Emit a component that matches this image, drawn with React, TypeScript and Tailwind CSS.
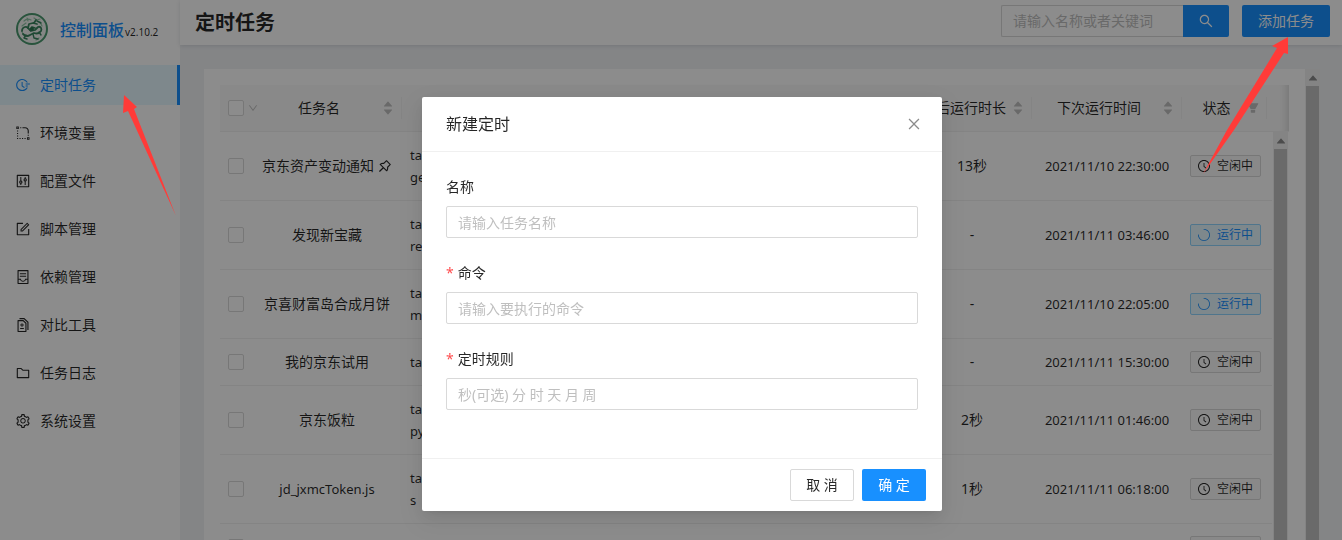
import { useState, type ReactNode } from "react"
import {
  AiFillCaretDown,
  AiFillCaretUp,
  AiFillFilter,
  AiOutlineClockCircle,
  AiOutlineClose,
  AiOutlineContainer,
  AiOutlineControl,
  AiOutlineDiff,
  AiOutlineDown,
  AiOutlineFieldTime,
  AiOutlineFolder,
  AiOutlineForm,
  AiOutlineLoading3Quarters,
  AiOutlinePushpin,
  AiOutlineRadiusSetting,
  AiOutlineSearch,
  AiOutlineSetting,
} from "react-icons/ai"

// trims the blank margin that the icons carry
const TIGHT = "64 64 896 896"

const MENU = [
  { label: "定时任务", icon: AiOutlineFieldTime },
  { label: "环境变量", icon: AiOutlineRadiusSetting },
  { label: "配置文件", icon: AiOutlineControl },
  { label: "脚本管理", icon: AiOutlineForm },
  { label: "依赖管理", icon: AiOutlineContainer },
  { label: "对比工具", icon: AiOutlineDiff },
  { label: "任务日志", icon: AiOutlineFolder },
  { label: "系统设置", icon: AiOutlineSetting },
]

type Task = {
  name: string
  command: string[]
  duration: string
  next: string
  running?: boolean
  pinned?: boolean
}

const TASKS: Task[] = [
  { name: "京东资产变动通知", command: ["task jd_bean_chan", "ge.js"], duration: "13秒", next: "2021/11/10 22:30:00", pinned: true },
  { name: "发现新宝藏", command: ["task jd_t", "reasure.js"], duration: "-", next: "2021/11/11 03:46:00", running: true },
  { name: "京喜财富岛合成月饼", command: ["task jd_cfd_", "mooncake.js"], duration: "-", next: "2021/11/10 22:05:00", running: true },
  { name: "我的京东试用", command: ["task jd_try.js"], duration: "-", next: "2021/11/11 15:30:00" },
  { name: "京东饭粒", command: ["task jd_fanli.", "py"], duration: "2秒", next: "2021/11/11 01:46:00" },
  { name: "jd_jxmcToken.js", command: ["task jd_jxmcToken.j", "s"], duration: "1秒", next: "2021/11/11 06:18:00" },
  { name: "京东试用", command: ["task jd_trial.js"], duration: "-", next: "2021/11/11 08:00:00" },
]

function Logo() {
  return (
    <svg viewBox="0 0 32 32" className="h-8 w-8 shrink-0" fill="none" strokeLinecap="round" strokeLinejoin="round">
      <circle cx="16" cy="16" r="15" fill="#f2f5f2" stroke="#4c9a70" strokeWidth="2" />
      <g stroke="#8fc4a6" strokeWidth="1.2">
        <path d="M8 8c2-2 5-2 7-1M18 5l3 2 3-1M6 13l4-3M24 9l2 4M8 22l-2-3M20 27l3-2M11 5l1 3" />
      </g>
      <g stroke="#3a8560" strokeWidth="1.8">
        <path d="M6 18c0-4 4-5 6-3l3 3 4-1 3-3c3-1 4 2 3 4-2 3-4 3-7 2l-4 2c-3 2-5 1-7-1" />
        <path d="M12 15l1-4 4-1 4 1M18 10l2-3M14 17l2-3 3 1" />
        <path d="M10 22l-2 3 3 1M17 21l1 4 4 1M23 19l2 3M21 8l4 2" strokeWidth="1.4" />
      </g>
      <circle cx="16" cy="16" r="2" fill="#2c7550" />
    </svg>
  )
}

function Sidebar() {
  return (
    <aside className="w-[180px] shrink-0 bg-white">
      <div className="flex h-[65px] items-center gap-3 pb-2 pl-4">
        <Logo />
        <div className="flex items-baseline whitespace-nowrap pt-1">
          <span className="text-base font-medium text-[#1890ff]">控制面板</span>
          <span className="pl-px text-[10px] text-black/85">v2.10.2</span>
        </div>
      </div>
      <nav className="flex flex-col gap-2">
        {MENU.map(({ label, icon: Icon }, i) => (
          <a
            key={label}
            href="#"
            className={
              i === 0
                ? "flex h-10 items-center gap-2.5 border-r-3 border-[#1890ff] bg-[#e6f7ff] pl-4 text-[#1890ff]"
                : "flex h-10 items-center gap-2.5 pl-4 text-black/85"
            }
          >
            <Icon size={14} viewBox={TIGHT} />
            {label}
          </a>
        ))}
      </nav>
    </aside>
  )
}

function PageHeader() {
  return (
    <header className="flex h-[45px] shrink-0 items-center justify-between bg-white pr-3 pb-[3px] pl-[15px] shadow-[0_1px_4px_rgba(0,21,41,0.12)]">
      <h1 className="pt-1 text-xl font-semibold text-black/85">定时任务</h1>
      <div className="flex gap-[13px]">
        <form className="flex h-8" onSubmit={(e) => e.preventDefault()}>
          <input
            aria-label="搜索任务"
            placeholder="请输入名称或者关键词"
            className="w-[182px] rounded-l-xs border border-r-0 border-[#d9d9d9] px-[11px] placeholder:text-[#bfbfbf]"
          />
          <button aria-label="搜索" className="flex w-[46px] items-center justify-center rounded-r-xs bg-[#1890ff] text-white">
            <AiOutlineSearch size={14} viewBox={TIGHT} />
          </button>
        </form>
        <button className="h-8 rounded-xs bg-[#1890ff] px-4 text-white">添加任务</button>
      </div>
    </header>
  )
}

function Columns() {
  return (
    <colgroup>
      <col className="w-8" />
      <col className="w-[150px]" />
      <col />
      <col className="w-[150px]" />
      <col className="w-[120px]" />
      <col className="w-[150px]" />
      <col className="w-[85px]" />
      <col className="w-[5px]" />
    </colgroup>
  )
}

function Sorter() {
  return (
    <span className="flex flex-col items-center text-[#bfbfbf]">
      <AiFillCaretUp size={12} className="-mb-1" />
      <AiFillCaretDown size={12} />
    </span>
  )
}

function HeadCell({ title, icon }: { title: string; icon?: ReactNode }) {
  return (
    <th className="p-0 font-normal">
      <div className="flex h-[22px] items-center gap-1 border-r border-[#f0f0f0] pr-[7px] pl-2">
        <span className="flex-1 whitespace-nowrap">{title}</span>
        {icon}
      </div>
    </th>
  )
}

function Checkbox({ label }: { label: string }) {
  return (
    <input
      type="checkbox"
      aria-label={label}
      className="block h-4 w-4 shrink-0 appearance-none rounded-xs border border-[#d9d9d9] bg-white"
    />
  )
}

function ScrollBar() {
  return (
    <div className="flex w-[15px] shrink-0 flex-col items-center bg-[#f1f1f1]">
      <span className="flex h-[17px] items-center text-[#8a8a8a]">
        <AiFillCaretUp size={12} />
      </span>
      <span className="w-[13px] flex-1 bg-[#c1c1c1]" />
    </div>
  )
}

function StatusTag({ running }: { running?: boolean }) {
  return (
    <span
      className={
        running
          ? "flex h-[22px] w-[71px] items-center gap-[7px] rounded-xs border border-[#91d5ff] bg-[#e6f7ff] pl-[7px] text-xs text-[#1890ff]"
          : "flex h-[22px] w-[71px] items-center gap-[7px] rounded-xs border border-[#d9d9d9] bg-[#fafafa] pl-[7px] text-xs text-black/85"
      }
    >
      {running ? <AiOutlineLoading3Quarters size={12} /> : <AiOutlineClockCircle size={12} viewBox={TIGHT} />}
      {running ? "运行中" : "空闲中"}
    </span>
  )
}

function TaskTable() {
  return (
    <div className="flex min-h-0 flex-1 flex-col">
      <div className="border-b border-[#f0f0f0] bg-[#fafafa] pr-[17px] shadow-[inset_-10px_0_8px_-8px_rgba(0,0,0,0.15)]">
        <table className="h-[46px] w-full table-fixed">
          <Columns />
          <thead>
            <tr>
              <th className="p-0">
                <span className="flex items-center gap-1 pl-2">
                  <Checkbox label="全选" />
                  <AiOutlineDown size={10} viewBox={TIGHT} className="shrink-0 text-[#bfbfbf]" />
                </span>
              </th>
              <HeadCell title="任务名" icon={<Sorter />} />
              <HeadCell title="任务" icon={<Sorter />} />
              <HeadCell title="最后运行时间" icon={<Sorter />} />
              <HeadCell title="最后运行时长" icon={<Sorter />} />
              <HeadCell title="下次运行时间" icon={<Sorter />} />
              <HeadCell title="状态" icon={<AiFillFilter size={12} viewBox={TIGHT} className="text-[#bfbfbf]" />} />
              <th />
            </tr>
          </thead>
        </table>
      </div>
      <div className="flex min-h-0 flex-1 overflow-hidden">
        <div className="min-w-0 flex-1">
          <table className="w-full table-fixed border-separate border-spacing-0 text-center [&_td]:border-b [&_td]:border-[#f0f0f0] [&_td]:py-3">
            <Columns />
            <tbody>
              {TASKS.map((task) => (
                <tr key={task.name}>
                  <td className="pl-2">
                    <Checkbox label={task.name} />
                  </td>
                  <td className={task.name.startsWith("jd") ? "text-[13px] leading-[22px]" : "whitespace-nowrap"}>
                    <span className="inline-flex items-center gap-1">
                      {task.name}
                      {task.pinned && <AiOutlinePushpin size={14} viewBox={TIGHT} />}
                    </span>
                  </td>
                  <td className="pl-2 text-left text-[13px] leading-[22px]">
                    {task.command.map((line) => (
                      <div key={line}>{line}</div>
                    ))}
                  </td>
                  <td />
                  <td>{task.duration}</td>
                  <td className="text-[13px] leading-[22px]">{task.next}</td>
                  <td className="pl-2">
                    <StatusTag running={task.running} />
                  </td>
                  <td />
                </tr>
              ))}
            </tbody>
          </table>
        </div>
        <div className="flex w-[17px] shrink-0 pl-px">
          <ScrollBar />
        </div>
      </div>
    </div>
  )
}

function Field({ id, label, placeholder, required }: { id: string; label: string; placeholder: string; required?: boolean }) {
  return (
    <div className="mb-6">
      <label htmlFor={id} className="flex gap-1 pb-2">
        {required && <span className="text-[#ff4d4f]">*</span>}
        <span>{label}</span>
      </label>
      <input
        id={id}
        placeholder={placeholder}
        className="block h-8 w-full rounded-xs border border-[#d9d9d9] px-[11px] placeholder:text-[#bfbfbf]"
      />
    </div>
  )
}

function CreateModal({ onClose }: { onClose: () => void }) {
  return (
    <div className="fixed inset-0 flex items-start justify-center bg-black/45 pt-[97px] pl-[22px]">
      <div
        role="dialog"
        aria-label="新建定时"
        className="w-[520px] rounded-xs bg-white shadow-[0_3px_6px_-4px_rgba(0,0,0,0.12),0_6px_16px_rgba(0,0,0,0.08),0_9px_28px_8px_rgba(0,0,0,0.05)]"
      >
        <div className="flex h-[55px] items-center justify-between border-b border-[#f0f0f0] pr-[21px] pl-6">
          <h2 className="text-base">新建定时</h2>
          <button aria-label="关闭" onClick={onClose} className="text-black/45">
            <AiOutlineClose size={14} viewBox={TIGHT} />
          </button>
        </div>
        <div className="p-6">
          <Field id="name" label="名称" placeholder="请输入任务名称" />
          <Field id="command" label="命令" placeholder="请输入要执行的命令" required />
          <Field id="schedule" label="定时规则" placeholder="秒(可选) 分 时 天 月 周" required />
        </div>
        <div className="flex justify-end gap-2 border-t border-[#f0f0f0] px-4 py-2.5">
          <button onClick={onClose} className="h-8 w-16 rounded-xs border border-[#d9d9d9]">
            取 消
          </button>
          <button className="h-8 w-16 rounded-xs bg-[#1890ff] text-white">确 定</button>
        </div>
      </div>
    </div>
  )
}

// red pointers towards the menu entry and the add button
function Pointers() {
  return (
    <>
      <svg viewBox="0 0 54 122" className="pointer-events-none fixed top-[95px] left-[122px] h-[122px] w-[54px]" fill="#ff3b38">
        <path d="M2 0L15 12L12 14L54 121L6 16L1 18z" />
      </svg>
      <svg viewBox="0 0 88 138" className="pointer-events-none fixed top-[37px] right-[52px] h-[138px] w-[88px]" fill="#ff3b38">
        <path d="M86 0L70 9L75 11L25 93L1 137L32 93L82 16L86 17z" />
      </svg>
    </>
  )
}

export default function App() {
  const [open, setOpen] = useState(true)

  return (
    <div className="flex h-screen overflow-hidden bg-[#f0f2f5] font-['Noto_Sans','Noto_Sans_CJK_SC',sans-serif] text-sm leading-[22px] text-black/85">
      <Sidebar />
      <div className="flex min-w-0 flex-1 flex-col">
        <PageHeader />
        <main className="flex min-h-0 flex-1 pt-6 pr-[22px] pl-6">
          <section className="flex min-w-0 flex-1 flex-col bg-white px-4 pt-4">
            <TaskTable />
          </section>
          <ScrollBar />
        </main>
      </div>
      {open && <CreateModal onClose={() => setOpen(false)} />}
      <Pointers />
    </div>
  )
}
